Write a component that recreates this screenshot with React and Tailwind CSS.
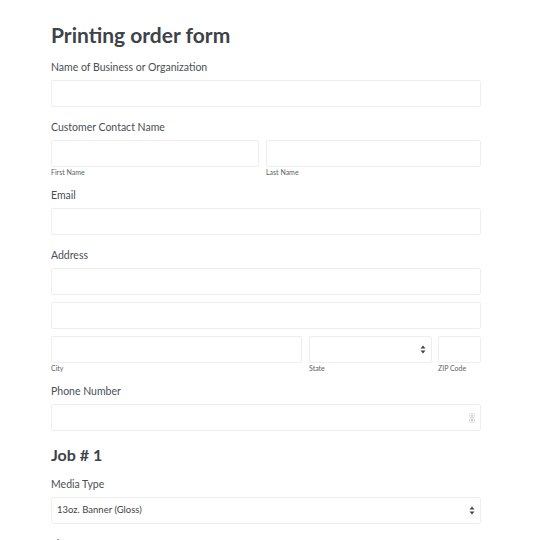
import React from "react";

const font = { fontFamily: "Lato, 'Open Sans', sans-serif" };

const Label = ({ children }) => (
    <div className="text-[10.5px] leading-[14px] text-[#4a4f55] mb-[6px]">{children}</div>
);

const Sub = ({ children }) => (
    <div className="text-[7px] leading-[9px] text-[#5c6167] mt-[1px]">{children}</div>
);

const Box = ({ className = "", children }) => (
    <div className={`h-[27px] border border-[#eeeeee] bg-white rounded-[2px] flex items-center ${className}`}>
        {children}
    </div>
);

const Arrows = () => (
    <svg width="6" height="9" viewBox="0 0 6 9" className="ml-auto mr-[5px]">
        <path d="M3 0.5L5.5 3.5H0.5Z" fill="#444" />
        <path d="M3 8.5L5.5 5.5H0.5Z" fill="#444" />
    </svg>
);

const Spinner = () => (
    <svg width="6" height="10" viewBox="0 0 6 10" className="ml-auto mr-[5px]">
        <rect x="0.5" y="0.5" width="5" height="4" rx="1" fill="none" stroke="#ccc" strokeWidth="0.6" />
        <rect x="0.5" y="5.5" width="5" height="4" rx="1" fill="none" stroke="#ccc" strokeWidth="0.6" />
        <path d="M3 1.6L4.2 3.4H1.8Z" fill="#aaa" />
        <path d="M3 8.4L4.2 6.6H1.8Z" fill="#aaa" />
    </svg>
);

export default function App() {
    return (
        <div className="w-[542px] h-[540px] overflow-hidden bg-white" style={font}>
            <div className="w-[430px] ml-[51px] pt-[21px]">
                <h1 className="text-[21px] leading-[28px] font-bold text-[#3d4349] mb-[11px]">Printing order form</h1>

                {/* Empresa */}
                <Label>Name of Business or Organization</Label>
                <Box />

                {/* Contacto */}
                <div className="mt-[13px]">
                    <Label>Customer Contact Name</Label>
                    <div className="flex gap-[7px]">
                        <div className="w-[208px]">
                            <Box />
                            <Sub>First Name</Sub>
                        </div>
                        <div className="flex-1">
                            <Box />
                            <Sub>Last Name</Sub>
                        </div>
                    </div>
                </div>

                {/* Email */}
                <div className="mt-[11px]">
                    <Label>Email</Label>
                    <Box />
                </div>

                {/* Dirección */}
                <div className="mt-[13px]">
                    <Label>Address</Label>
                    <Box />
                    <Box className="mt-[7px]" />
                    <div className="flex mt-[7px]">
                        <div className="w-[251px]">
                            <Box />
                            <Sub>City</Sub>
                        </div>
                        <div className="w-[123px] ml-[7px]">
                            <Box><Arrows /></Box>
                            <Sub>State</Sub>
                        </div>
                        <div className="flex-1 ml-[6px]">
                            <Box />
                            <Sub>ZIP Code</Sub>
                        </div>
                    </div>
                </div>

                {/* Teléfono */}
                <div className="mt-[11px]">
                    <Label>Phone Number</Label>
                    <Box><Spinner /></Box>
                </div>

                <h2 className="text-[16px] leading-[20px] font-bold text-[#3d4349] mt-[14px] mb-[12px]">Job # 1</h2>

                <Label>Media Type</Label>
                <Box>
                    <span className="text-[9.5px] text-[#444] ml-[5px]">13oz. Banner (Gloss)</span>
                    <Arrows />
                </Box>

                <div className="mt-[13px]">
                    <Label>Size</Label>
                </div>
            </div>
        </div>
    );
}
